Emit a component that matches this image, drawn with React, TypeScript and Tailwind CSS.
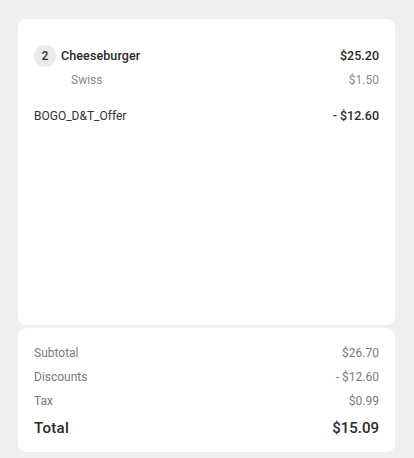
import React from "react";

export default function App() {
  return (
    <div
      className="w-[414px] h-[458px] bg-[#efefef] pt-[19px] px-[18px] flex flex-col gap-[3px]"
      style={{ fontFamily: "Roboto, 'Liberation Sans', sans-serif" }}
    >
      <div className="bg-white rounded-[8px] h-[306px] px-4 pt-[26px] w-[377px]">
        <div className="flex items-center justify-between h-[22px]">
          <div className="flex items-center">
            <div className="w-[22px] h-[22px] rounded-full bg-[#ebebeb] flex items-center justify-center text-[12px] font-medium text-[#333]">
              2
            </div>
            <span className="ml-[5px] text-[12.5px] font-medium text-[#2a2a2a] tracking-[0.1px]">Cheeseburger</span>
          </div>
          <span className="text-[12.5px] font-medium text-[#2a2a2a]">$25.20</span>
        </div>
        <div className="flex items-center justify-between h-[16px] mt-[5px] pl-[37px]">
          <span className="text-[12px] text-[#8a8a8a]">Swiss</span>
          <span className="text-[12px] text-[#8a8a8a]">$1.50</span>
        </div>
        <div className="flex items-center justify-between h-[16px] mt-[20px]">
          <span className="text-[12px] text-[#333]">BOGO_D&amp;T_Offer</span>
          <span className="text-[12.5px] font-medium text-[#2a2a2a]">- $12.60</span>
        </div>
      </div>
      <div className="bg-white rounded-[8px] h-[124px] px-4 pt-[17px] w-[377px]">
        <div className="flex items-center justify-between h-[16px]">
          <span className="text-[12px] text-[#7a7a7a]">Subtotal</span>
          <span className="text-[12px] text-[#7a7a7a]">$26.70</span>
        </div>
        <div className="flex items-center justify-between h-[16px] mt-[8px]">
          <span className="text-[12px] text-[#7a7a7a]">Discounts</span>
          <span className="text-[12px] text-[#7a7a7a]">- $12.60</span>
        </div>
        <div className="flex items-center justify-between h-[16px] mt-[8px]">
          <span className="text-[12px] text-[#7a7a7a]">Tax</span>
          <span className="text-[12px] text-[#7a7a7a]">$0.99</span>
        </div>
        <div className="flex items-center justify-between h-[20px] mt-[9px]">
          <span className="text-[15px] font-medium text-[#2a2a2a] tracking-[0.3px]">Total</span>
          <span className="text-[15px] font-medium text-[#2a2a2a]">$15.09</span>
        </div>
      </div>
    </div>
  );
}
